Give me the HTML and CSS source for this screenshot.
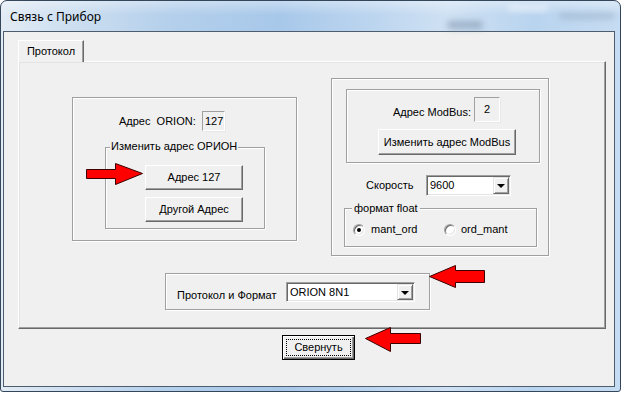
FILE: index.html
```html
<!DOCTYPE html>
<html lang="ru">
<head>
<meta charset="utf-8">
<title>Связь с Прибор</title>
<link rel="stylesheet" href="styles.css">
</head>
<body>
<div class="window">
  <div class="titlebar">
    <span class="title">Связь с Прибор</span>
    <span class="glass-blur gb1"></span>
    <span class="glass-blur gb2"></span>
    <span class="glass-blur gb3"></span>
  </div>
  <div class="client">
    <div class="tab">Протокол</div>
    <div class="panel">
      <div class="top-row">
        <div class="group g-orion">
          <div class="row-orion">
            <span class="lbl lbl-orion">Адрес&nbsp; ORION:</span>
            <span class="static st-orion">127</span>
          </div>
          <div class="group g-change">
            <span class="gb-title t-change">Изменить адрес ОРИОН</span>
            <button class="btn btn-addr">Адрес 127</button>
            <button class="btn btn-other">Другой Адрес</button>
          </div>
        </div>
        <div class="group g-right">
          <div class="group g-modbus">
            <div class="row-mb">
              <span class="lbl lbl-mb">Адрес ModBus:</span>
              <span class="static st-mb">2</span>
            </div>
            <button class="btn btn-mb">Изменить адрес ModBus</button>
          </div>
          <div class="row-speed">
            <span class="lbl lbl-speed">Скорость</span>
            <div class="combo cb-speed"><span class="cb-val">9600</span><span class="cb-drop"><span class="tri"></span></span></div>
          </div>
          <div class="group g-float">
            <span class="gb-title t-float">формат float</span>
            <div class="radios">
              <span class="radio r1"><span class="rb checked"></span>mant_ord</span>
              <span class="radio r2"><span class="rb"></span>ord_mant</span>
            </div>
          </div>
        </div>
      </div>
      <div class="group g-proto">
        <span class="lbl lbl-proto">Протокол и Формат</span>
        <div class="combo cb-proto"><span class="cb-val">ORION 8N1</span><span class="cb-drop"><span class="tri"></span></span></div>
      </div>
    </div>
    <button class="btn btn-default"><span class="focus">Свернуть</span></button>
  </div>
</div>
<svg class="arrows" width="623" height="394" viewBox="0 0 623 394">
  <polygon points="86.5,169.5 115.5,169.5 115.5,163.5 142.5,173.5 115.5,184.5 115.5,178.5 86.5,178.5" />
  <polygon points="429.5,276.5 455.5,265.5 455.5,270.5 484.5,270.5 484.5,282.5 455.5,282.5 455.5,287.5" />
  <polygon points="365.5,338.5 390.5,327.5 390.5,333.5 420.5,333.5 420.5,343.5 390.5,343.5 390.5,351.5" />
</svg>
</body>
</html>
```

FILE: styles.css
```css
* { box-sizing: border-box; }
html, body { margin: 0; padding: 0; background: #fff; }
body {
  width: 623px; height: 394px; overflow: hidden; position: relative;
  font-family: "Liberation Sans", Arial, sans-serif; font-size: 11px; line-height: 13px; color: #000;
}

.window {
  width: 621px; height: 392px;
  border: 1px solid #34465a;
  border-radius: 7px 7px 3px 3px;
  padding: 0 5px 4px 2px;
  display: flex; flex-direction: column;
  overflow: hidden;
  background:
    linear-gradient(180deg, rgba(255,255,255,0.35) 0, rgba(255,255,255,0) 14px),
    linear-gradient(90deg, #e2ebf4 0%, #cfe0f1 10%, #b3cfeb 28%, #a8c8ea 45%, #bcd5ef 60%, #cfe1f3 72%, #b9d4ef 86%, #c6dcf2 100%);
}

.titlebar {
  height: 30px; flex: none;
  display: flex; align-items: center;
  padding-left: 7px;
  position: relative;
}
.title {
  font-family: "Noto Sans", "Open Sans", sans-serif; font-size: 12px; line-height: 16px; color: #000;
  margin-top: 1px;
}
.glass-blur { position: absolute; border-radius: 6px; filter: blur(3px); }
.gb1 { left: 444px; top: 20px; width: 36px; height: 8px; background: rgba(120,140,165,0.55); }
.gb2 { left: 556px; top: 12px; width: 56px; height: 6px; background: rgba(140,160,185,0.45); }
.gb3 { left: 505px; top: 4px; width: 40px; height: 6px; background: rgba(255,255,255,0.5); }

.client {
  flex: none;
  width: 612px; height: 356px;
  border: 1px solid #4e5d6e;
  background: #f0f0f0;
  padding-top: 8px;
}

.tab {
  position: relative; z-index: 1;
  margin-left: 14px; width: 66px; height: 22px; margin-bottom: -1px;
  background: #f0f0f0;
  border-top: 1px solid #fff; border-left: 1px solid #fff; border-right: 1px solid #696969;
  box-shadow: inset -1px 0 0 #a0a0a0;
  padding-top: 4px; text-align: center;
}

.panel {
  margin-left: 14px; width: 588px; height: 268px;
  border-style: solid; border-width: 1px;
  border-color: #fff #696969 #696969 #fff;
  box-shadow: inset -1px -1px 0 #a0a0a0, inset 1px 1px 0 #e3e3e3;
}

.top-row { display: flex; align-items: flex-start; padding-top: 16px; }

.group {
  border: 1px solid #a0a0a0;
  box-shadow: inset 1px 1px 0 #fff, 1px 1px 0 #fff;
  flex: none;
}
.gb-title {
  display: block; width: max-content;
  background: #f0f0f0; line-height: 13px;
}

.g-orion { margin: 19px 0 0 53px; width: 225px; height: 144px; }
.row-orion { display: flex; align-items: center; height: 20px; margin: 13px 0 0 46px; }
.lbl-orion { width: 83px; }

.static {
  display: block;
  border-style: solid; border-width: 1px;
  border-color: #a0a0a0 #fff #fff #a0a0a0;
  box-shadow: 1px 1px 0 #e8e8e8;
}
.st-orion { width: 23px; height: 20px; padding: 3px 0 0 2px; }

.g-change { margin: 16px 0 0 32px; width: 160px; height: 82px; }
.t-change { margin: -8px 0 0 4px; padding: 0 1px; }

.btn {
  display: block; padding: 0;
  font-family: "Liberation Sans", Arial, sans-serif; font-size: 11px; line-height: 13px; color: #000;
  background: #f0f0f0;
  border-style: solid; border-width: 1px;
  border-color: #fff #696969 #696969 #fff;
  box-shadow: inset -1px -1px 0 #a0a0a0, inset 1px 1px 0 #f0f0f0;
  text-align: center;
}
.btn-addr { margin: 12px 0 0 39px; width: 98px; height: 25px; }
.btn-other { margin: 7px 0 0 39px; width: 98px; height: 25px; }

.g-right { margin: 0 0 0 34px; width: 218px; height: 178px; }
.g-modbus { margin: 10px 0 0 14px; width: 194px; height: 74px; }
.row-mb { display: flex; align-items: center; height: 25px; margin: 7px 0 0 46px; }
.lbl-mb { width: 81px; margin-top: 5px; }
.st-mb { width: 26px; height: 25px; padding-top: 5px; text-align: center; }
.btn-mb { margin: 7px 0 0 31px; width: 138px; height: 26px; }

.row-speed { display: flex; align-items: center; height: 21px; margin: 12px 0 0 34px; }
.lbl-speed { width: 60px; }

.combo {
  display: flex; flex: none;
  background: #fff;
  border-style: solid; border-width: 1px;
  border-color: #a0a0a0 #fff #fff #a0a0a0;
  box-shadow: inset 1px 1px 0 #696969, inset -1px -1px 0 #e3e3e3;
  padding: 1px;
}
.cb-speed { width: 85px; height: 21px; }
.cb-proto { width: 129px; height: 20px; }
.cb-val { flex: 1; padding: 2px 0 0 2px; }
.cb-drop {
  width: 16px; flex: none;
  display: flex; align-items: center; justify-content: center;
  background: #f0f0f0;
  border-style: solid; border-width: 1px;
  border-color: #e3e3e3 #696969 #696969 #e3e3e3;
  box-shadow: inset 1px 1px 0 #fff, inset -1px -1px 0 #a0a0a0;
}
.tri {
  width: 0; height: 0;
  border-left: 4px solid transparent; border-right: 4px solid transparent;
  border-top: 4px solid #000;
  margin-top: 1px;
}

.g-float { margin: 12px 0 0 12px; width: 193px; height: 39px; }
.t-float { margin: -7px 0 0 7px; padding: 0 2px; }
.radios { display: flex; margin: 8px 0 0 8px; height: 13px; align-items: center; }
.radio { display: flex; align-items: center; gap: 6px; }
.r1 { width: 91px; }
.r2 { gap: 5px; }
.rb {
  width: 12px; height: 12px; border-radius: 50%;
  background: #fff;
  border-style: solid; border-width: 1px;
  border-color: #a0a0a0 #fff #fff #a0a0a0;
  box-shadow: inset 1px 1px 0 #696969, inset -1px -1px 0 #e3e3e3;
  display: flex; align-items: center; justify-content: center;
}
.rb.checked::after {
  content: ""; width: 4px; height: 4px; border-radius: 50%; background: #000;
}

.g-proto {
  margin: 17px 0 0 146px; width: 265px; height: 37px;
  display: flex; align-items: flex-start;
  padding: 8px 0 0 11px;
}
.lbl-proto { width: 109px; margin-top: 7px; }

.btn-default {
  margin: 6px 0 0 278px; width: 73px; height: 25px;
  border: 1px solid #000;
  box-shadow: inset 1px 1px 0 #fff, inset -1px -1px 0 #696969, inset -2px -2px 0 #a0a0a0;
  padding: 3px;
}
.focus {
  display: block; height: 17px;
  border: 1px dotted #000;
  line-height: 13px; padding-top: 1px;
}

.arrows { position: absolute; left: 0; top: 0; pointer-events: none; }
.arrows polygon { fill: #ff0000; stroke: #3a0000; stroke-width: 1; stroke-linejoin: miter; }
```
